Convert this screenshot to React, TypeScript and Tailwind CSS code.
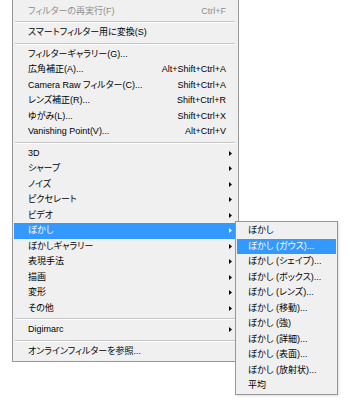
type Item =
  | { sep: true }
  | { label: string; shortcut?: string; sub?: boolean; disabled?: boolean; active?: boolean };

const mainItems: Item[] = [
  { label: 'フィルターの再実行(F)', shortcut: 'Ctrl+F', disabled: true },
  { sep: true },
  { label: 'スマートフィルター用に変換(S)' },
  { sep: true },
  { label: 'フィルターギャラリー(G)...' },
  { label: '広角補正(A)...', shortcut: 'Alt+Shift+Ctrl+A' },
  { label: 'Camera Raw フィルター(C)...', shortcut: 'Shift+Ctrl+A' },
  { label: 'レンズ補正(R)...', shortcut: 'Shift+Ctrl+R' },
  { label: 'ゆがみ(L)...', shortcut: 'Shift+Ctrl+X' },
  { label: 'Vanishing Point(V)...', shortcut: 'Alt+Ctrl+V' },
  { sep: true },
  { label: '3D', sub: true },
  { label: 'シャープ', sub: true },
  { label: 'ノイズ', sub: true },
  { label: 'ピクセレート', sub: true },
  { label: 'ビデオ', sub: true },
  { label: 'ぼかし', sub: true, active: true },
  { label: 'ぼかしギャラリー', sub: true },
  { label: '表現手法', sub: true },
  { label: '描画', sub: true },
  { label: '変形', sub: true },
  { label: 'その他', sub: true },
  { sep: true },
  { label: 'Digimarc', sub: true },
  { sep: true },
  { label: 'オンラインフィルターを参照...' },
];

const blurItems = [
  'ぼかし',
  'ぼかし (ガウス)...',
  'ぼかし (シェイプ)...',
  'ぼかし (ボックス)...',
  'ぼかし (レンズ)...',
  'ぼかし (移動)...',
  'ぼかし (強)',
  'ぼかし (詳細)...',
  'ぼかし (表面)...',
  'ぼかし (放射状)...',
  '平均',
];

function Arrow({ white }: { white?: boolean }) {
  return (
    <svg width="3" height="5" viewBox="0 0 3 5" className="mr-[5px] shrink-0">
      <polygon points="0,0 3,2.5 0,5" fill={white ? '#ffffff' : '#000000'} />
    </svg>
  );
}

function Separator() {
  return (
    <div className="h-[6px] flex flex-col justify-center ml-[1px] mr-[2px]">
      <div className="h-px bg-[#c5c5c5]" />
      <div className="h-px bg-white" />
    </div>
  );
}

export default function App() {
  return (
    <div className="relative w-[350px] h-[400px] bg-white overflow-hidden font-['Liberation_Sans','Noto_Sans_CJK_JP',sans-serif] text-[9px] text-black [font-feature-settings:'palt']">
      {/* main filter menu */}
      <div className="ml-[12px] w-[227px] bg-[#f0f0f0] border-x border-b border-[#979797] px-[1px] pt-[3.5px] pb-[2px]">
        {mainItems.map((item, i) => {
          if ('sep' in item) return <Separator key={i} />;
          return (
            <div
              key={i}
              className={
                'h-[15.5px] flex items-center pl-[14px] ' +
                (item.active ? 'bg-[#3399ff] text-white' : item.disabled ? 'text-[#8e8e8e]' : '')
              }
            >
              <span className="whitespace-nowrap">{item.label}</span>
              {item.shortcut && <span className="ml-auto pr-[11px] whitespace-nowrap">{item.shortcut}</span>}
              {item.sub && (
                <span className="ml-auto flex items-center">
                  <Arrow white={item.active} />
                </span>
              )}
            </div>
          );
        })}
      </div>

      {/* blur submenu */}
      <div className="absolute left-[235px] top-[221px] w-[103px] bg-[#f0f0f0] border border-[#979797] px-[1px] pt-[1px] shadow-[1px_1px_2px_rgba(0,0,0,0.12)]">
        {blurItems.map((label, i) => (
          <div
            key={label}
            className={'h-[15.5px] flex items-center pl-[11px] whitespace-nowrap ' + (i === 1 ? 'bg-[#3399ff] text-white' : '')}
          >
            {label}
          </div>
        ))}
      </div>
    </div>
  );
}
